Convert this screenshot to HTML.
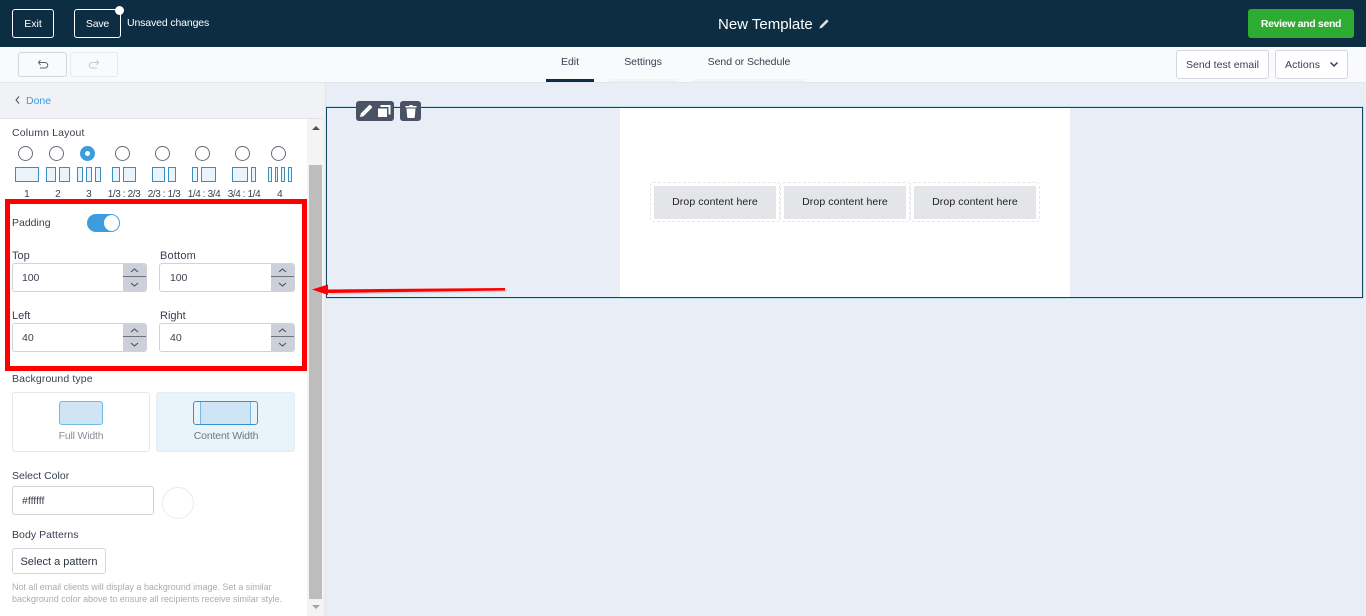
<!DOCTYPE html>
<html><head><meta charset="utf-8"><title>New Template</title>
<style>
html,body{margin:0;padding:0;width:1366px;height:616px;overflow:hidden;background:#e9eef6}
body{position:relative;font-family:"Liberation Sans",sans-serif;font-size:10.5px;color:#3a4050}
.a{position:absolute;box-sizing:border-box}
.t{position:absolute;white-space:nowrap;line-height:14px;letter-spacing:0}
.c{transform:translateX(-50%)}
.btn{position:absolute;box-sizing:border-box;border:1px solid #d3d6de;border-radius:3px;background:#fff;text-align:center;white-space:nowrap}
.lay{position:absolute;box-sizing:border-box;top:167px;height:15px;border:1px solid #3a8fc0;background:#eaf4fa}
.rad{position:absolute;box-sizing:border-box;top:146px;width:15px;height:15px;border-radius:50%;border:1px solid #666c78;background:#fff}
.inp{position:absolute;box-sizing:border-box;height:29px;border:1px solid #cfd2da;border-radius:3px;background:#fff}
.spin{position:absolute;right:0;top:0;bottom:0;width:23px;background:#cdd0d8;border-radius:0 2px 2px 0}
.spin i{position:absolute;left:0;right:0;top:12px;height:1px;background:#6b7280}
.spin svg{position:absolute;left:6px;width:11px;height:7px}
.spin svg path{fill:none;stroke:#4a5363;stroke-width:1.1}
.drop{position:absolute;box-sizing:border-box;top:182px;height:40px;border:1px dashed #e6e6e8;border-radius:3px}
.drop b{position:absolute;left:3px;top:3px;width:122px;height:33px;background:#e4e5e9;font-weight:normal;text-align:center;line-height:33px;color:#222;letter-spacing:.1px}
.n{font-size:10px;letter-spacing:.1px}
.f{font-size:10px;letter-spacing:-.4px}
</style></head><body>

<!-- top bar -->
<div class="a" style="left:0;top:0;width:1366px;height:47px;background:#0c2d42"></div>
<div class="btn" style="left:12px;top:9px;width:42px;height:29px;background:none;border-color:#fff;color:#fff;line-height:28px">Exit</div>
<div class="btn" style="left:74px;top:9px;width:47px;height:29px;background:none;border-color:#fff;color:#fff;line-height:28px;letter-spacing:-.2px">Save</div>
<div class="a" style="left:115px;top:6px;width:9px;height:9px;border-radius:50%;background:#fff"></div>
<span class="t" style="left:127px;top:16px;color:#fff;letter-spacing:-.13px">Unsaved changes</span>
<span class="t" style="left:718px;top:17px;color:#fff;font-size:15px;line-height:16px">New Template</span>
<svg class="a" style="left:819px;top:18px" width="11" height="11" viewBox="0 0 11 11"><path d="M0.500 10.500l.6-2.400L7.800 1.400l1.800 1.800-6.700 6.700z" fill="#dfe3e7"/></svg>
<div class="a" style="left:1248px;top:9px;width:106px;height:29px;background:#2eac32;border-radius:3px;color:#fff;font-weight:bold;text-align:center;line-height:30px;font-size:10.5px;letter-spacing:-.33px;white-space:nowrap">Review and send</div>

<!-- second bar -->
<div class="a" style="left:0;top:47px;width:1366px;height:36px;background:#f9fafc;border-bottom:1px solid #e4e6ea"></div>
<div class="btn" style="left:18px;top:52px;width:49px;height:25px;background:#f9fafc;border-color:#d3d6de"></div>
<div class="btn" style="left:70px;top:52px;width:48px;height:25px;background:#f9fafc;border-color:#e5e7ec"></div>
<svg class="a" style="left:37px;top:59px" width="12" height="11" viewBox="0 0 12 11"><path d="M3.500 1L1.500 3.500 3.500 6M1.500 3.500H8a2.700 2.700 0 0 1 0 5.500H3" fill="none" stroke="#5a6270" stroke-width="1"/></svg>
<svg class="a" style="left:88px;top:59px" width="12" height="11" viewBox="0 0 12 11"><path d="M8.500 1L10.500 3.500 8.500 6M10.500 3.500H4a2.700 2.700 0 0 0 0 5.500h5" fill="none" stroke="#c3c7cf" stroke-width="1"/></svg>

<span class="t c" style="left:570px;top:55px">Edit</span>
<div class="a" style="left:546px;top:79px;width:48px;height:3px;background:#0c2d42"></div>
<span class="t c" style="left:643px;top:55px;letter-spacing:-.05px">Settings</span>
<div class="a" style="left:609px;top:79px;width:69px;height:3px;background:#f2f3f5"></div>
<span class="t c" style="left:749px;top:55px;letter-spacing:-.05px">Send or Schedule</span>
<div class="a" style="left:693px;top:79px;width:112px;height:3px;background:#f2f3f5"></div>

<div class="btn" style="left:1176px;top:50px;width:93px;height:29px;line-height:28px;letter-spacing:.05px">Send test email</div>
<div class="btn" style="left:1275px;top:50px;width:73px;height:29px;line-height:28px;text-align:left;padding-left:9px;letter-spacing:.1px">Actions</div>
<svg class="a" style="left:1329px;top:61px" width="10" height="7" viewBox="0 0 10 7"><path d="M1.500 1.500L5 5l3.500-3.500" fill="none" stroke="#3a4050" stroke-width="1.500"/></svg>

<!-- left panel -->
<div class="a" style="left:0;top:83px;width:325px;height:533px;background:#fff"></div>
<div class="a" style="left:325px;top:83px;width:1px;height:533px;background:#e2e5ea"></div>
<div class="a" style="left:0;top:83px;width:325px;height:36px;background:#f1f2f5;border-bottom:1px solid #e2e4e9"></div>
<svg class="a" style="left:15px;top:96px" width="5" height="8" viewBox="0 0 5 8"><path d="M4 .5L1 4 4 7.500" fill="none" stroke="#4a5363" stroke-width="1"/></svg>
<span class="t" style="left:26px;top:94px;color:#3d9be0">Done</span>
<div class="a" style="left:307px;top:119px;width:16px;height:497px;background:#f4f4f4"></div>
<div class="a" style="left:323px;top:83px;width:2px;height:533px;background:#eef0f3"></div>
<div class="a" style="left:309px;top:165px;width:13px;height:434px;background:#bdbdbd"></div>
<div class="a" style="left:312px;top:126px;width:0;height:0;border:4px solid transparent;border-top:0;border-bottom:4px solid #505050"></div>
<div class="a" style="left:312px;top:605px;width:0;height:0;border:4px solid transparent;border-bottom:0;border-top:4px solid #a3a3a3"></div>

<span class="t" style="left:12px;top:126px;letter-spacing:.15px">Column Layout</span>
<div class="rad" style="left:18px"></div>
<div class="rad" style="left:49px"></div>
<div class="rad" style="left:80px;border:5px solid #3b9ddd"></div>
<div class="rad" style="left:115px"></div>
<div class="rad" style="left:155px"></div>
<div class="rad" style="left:195px"></div>
<div class="rad" style="left:235px"></div>
<div class="rad" style="left:271px"></div>

<div class="lay" style="left:15px;width:24px"></div>
<div class="lay" style="left:46px;width:10px"></div><div class="lay" style="left:59px;width:11px"></div>
<div class="lay" style="left:77px;width:6px"></div><div class="lay" style="left:86px;width:6px"></div><div class="lay" style="left:95px;width:6px"></div>
<div class="lay" style="left:112px;width:8px"></div><div class="lay" style="left:123px;width:13px"></div>
<div class="lay" style="left:152px;width:13px"></div><div class="lay" style="left:168px;width:8px"></div>
<div class="lay" style="left:192px;width:6px"></div><div class="lay" style="left:201px;width:15px"></div>
<div class="lay" style="left:232px;width:16px"></div><div class="lay" style="left:251px;width:5px"></div>
<div class="lay" style="left:268px;width:4px"></div><div class="lay" style="left:275px;width:3px"></div><div class="lay" style="left:281px;width:4px"></div><div class="lay" style="left:288px;width:4px"></div>

<span class="t c n" style="left:27px;top:188px">1</span>
<span class="t c n" style="left:58px;top:188px">2</span>
<span class="t c n" style="left:89px;top:188px">3</span>
<span class="t c f" style="left:124px;top:188px">1/3 : 2/3</span>
<span class="t c f" style="left:164px;top:188px">2/3 : 1/3</span>
<span class="t c f" style="left:204px;top:188px">1/4 : 3/4</span>
<span class="t c f" style="left:244px;top:188px">3/4 : 1/4</span>
<span class="t c n" style="left:280px;top:188px">4</span>

<span class="t" style="left:12px;top:216px">Padding</span>
<div class="a" style="left:87px;top:214px;width:33px;height:18px;border-radius:9px;background:#3b9ddd"></div>
<div class="a" style="left:104px;top:215px;width:15px;height:16px;border-radius:50%;background:#fff"></div>

<span class="t" style="left:12px;top:249px;font-size:11px">Top</span>
<span class="t" style="left:160px;top:249px;font-size:11px;letter-spacing:.2px">Bottom</span>
<span class="t" style="left:12px;top:309px;font-size:11px">Left</span>
<span class="t" style="left:160px;top:309px;font-size:11px">Right</span>

<div class="inp" style="left:12px;top:263px;width:135px"><div class="spin"><i></i><svg style="top:3px" viewBox="0 0 11 7"><path d="M2 5l3.500-3L9 5"/></svg><svg style="top:17px" viewBox="0 0 11 7"><path d="M2 2l3.500 3L9 2"/></svg></div></div>
<span class="t" style="left:22px;top:271px;letter-spacing:-.1px">100</span>
<div class="inp" style="left:159px;top:263px;width:136px"><div class="spin"><i></i><svg style="top:3px" viewBox="0 0 11 7"><path d="M2 5l3.500-3L9 5"/></svg><svg style="top:17px" viewBox="0 0 11 7"><path d="M2 2l3.500 3L9 2"/></svg></div></div>
<span class="t" style="left:170px;top:271px;letter-spacing:-.1px">100</span>
<div class="inp" style="left:12px;top:323px;width:135px"><div class="spin"><i></i><svg style="top:3px" viewBox="0 0 11 7"><path d="M2 5l3.500-3L9 5"/></svg><svg style="top:17px" viewBox="0 0 11 7"><path d="M2 2l3.500 3L9 2"/></svg></div></div>
<span class="t" style="left:22px;top:331px">40</span>
<div class="inp" style="left:159px;top:323px;width:136px"><div class="spin"><i></i><svg style="top:3px" viewBox="0 0 11 7"><path d="M2 5l3.500-3L9 5"/></svg><svg style="top:17px" viewBox="0 0 11 7"><path d="M2 2l3.500 3L9 2"/></svg></div></div>
<span class="t" style="left:170px;top:331px">40</span>

<div class="a" style="left:5px;top:199px;width:302px;height:172px;border:5px solid #f00"></div>

<span class="t" style="left:12px;top:372px;letter-spacing:.13px">Background type</span>
<div class="a" style="left:12px;top:392px;width:138px;height:60px;border:1px solid #e5e7eb;border-radius:3px;background:#fff"></div>
<div class="a" style="left:59px;top:401px;width:44px;height:24px;border:1px solid #74b9e6;border-radius:3px;background:#cfe5f5"></div>
<span class="t c" style="left:81px;top:429px;color:#8a8f98;letter-spacing:-.2px">Full Width</span>
<div class="a" style="left:156px;top:392px;width:139px;height:60px;border:1px solid #e3edf3;border-radius:3px;background:#e9f4fa"></div>
<div class="a" style="left:193px;top:401px;width:65px;height:24px;border:1px solid #3a8fc6;border-radius:3px;background:#e9f4fa"></div>
<div class="a" style="left:200px;top:402px;width:51px;height:22px;border-left:1px solid #74b9e6;border-right:1px solid #74b9e6;background:#cfe5f5"></div>
<span class="t c" style="left:226px;top:429px;color:#6f7682;letter-spacing:-.15px">Content Width</span>

<span class="t" style="left:12px;top:469px">Select Color</span>
<div class="inp" style="left:12px;top:486px;width:142px"></div>
<span class="t" style="left:22px;top:494px">#ffffff</span>
<div class="a" style="left:162px;top:487px;width:32px;height:32px;border:1px solid #ececee;border-radius:50%;background:#fff"></div>

<span class="t" style="left:12px;top:528px;letter-spacing:.05px">Body Patterns</span>
<div class="btn" style="left:12px;top:548px;width:94px;height:26px;line-height:26px;color:#2e3442;font-size:11px">Select a pattern</div>
<span class="t" style="left:12px;top:580px;font-size:9px;letter-spacing:-.03px;color:#a9acb3">Not all email clients will display a background image. Set a similar</span>
<span class="t" style="left:12px;top:592px;font-size:9px;letter-spacing:-.03px;color:#a9acb3">background color above to ensure all recipients receive similar style.</span>

<!-- canvas -->
<div class="a" style="left:326px;top:106px;width:1038px;height:193px;border:1px solid #bfe2ec"></div>
<div class="a" style="left:326px;top:107px;width:1037px;height:191px;border:1px solid #0f4560;background:#e9eef6"></div>
<div class="a" style="left:620px;top:108px;width:450px;height:189px;background:#fff"></div>
<div class="drop" style="left:650px;width:130px"><b>Drop content here</b></div>
<div class="drop" style="left:780px;width:130px"><b>Drop content here</b></div>
<div class="drop" style="left:910px;width:130px"><b>Drop content here</b></div>

<div class="a" style="left:356px;top:101px;width:38px;height:20px;background:#4a5363;border-radius:3px"></div>
<div class="a" style="left:400px;top:101px;width:21px;height:20px;background:#4a5363;border-radius:3px"></div>
<svg class="a" style="left:359px;top:104px" width="14" height="14" viewBox="0 0 14 14"><path d="M1 13l.8-3.500L9.500 1.800l2.700 2.700L4.500 12.200zM10.300 1l.7-.3 2.300 2.300-.3.700-.8.800L9.500 1.800z" fill="#fff"/></svg>
<svg class="a" style="left:378px;top:105px" width="13" height="13" viewBox="0 0 13 13"><path d="M2.500 0h10v9.500h-2V2h-8z" fill="#fff"/><path d="M0 3.500h9V12H0z" fill="#fff"/></svg>
<svg class="a" style="left:405px;top:104px" width="12" height="14" viewBox="0 0 12 14"><path d="M0.500 2h3.500l.6-1h2.800l.6 1h3.500v1.500h-11zM1.500 4.500h9l-.7 8.500a1 1 0 0 1-1 1h-5.600a1 1 0 0 1-1-1z" fill="#fff"/></svg>

<!-- arrow -->
<svg class="a" style="left:310px;top:280px;overflow:visible" width="200" height="20" viewBox="0 0 200 20">
<path d="M18 10L195 8V10.500L18 13z" fill="#555" opacity=".2" transform="translate(1.500 1.500)"/>
<path d="M2 9.500L18 4.500V9.500L195 8V10.500L18 13V15z" fill="#f00"/>
</svg>
</body></html>
